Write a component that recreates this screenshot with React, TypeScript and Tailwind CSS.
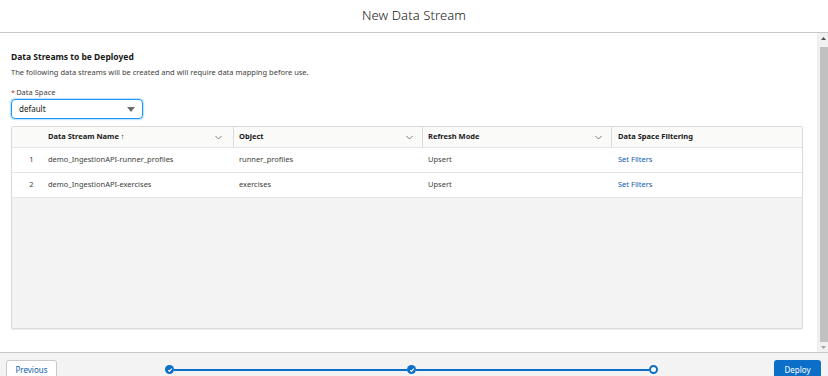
import React from "react";

interface Stream {
  name: string;
  object: string;
  mode: string;
}

const streams: Stream[] = [
  { name: "demo_IngestionAPI-runner_profiles", object: "runner_profiles", mode: "Upsert" },
  { name: "demo_IngestionAPI-exercises", object: "exercises", mode: "Upsert" },
];

const Chevron = () => (
  <svg width="9" height="9" viewBox="0 0 12 12" fill="none" stroke="#706e6b" strokeWidth="1.2">
    <path d="M2 4l4 4 4-4" />
  </svg>
);

const Check = () => (
  <span className="w-[9px] h-[9px] rounded-full bg-[#0b6ec8] flex items-center justify-center">
    <svg width="6" height="6" viewBox="0 0 10 10" fill="none" stroke="white" strokeWidth="2">
      <path d="M2 5.2l2 2 4-4.4" />
    </svg>
  </span>
);

export default function App() {
  return (
    <div
      className="w-[828px] h-[376px] flex flex-col bg-white overflow-hidden text-[#181818]"
      style={{ fontFamily: '"Noto Sans", "Open Sans", sans-serif' }}
    >
      <div className="h-[33px] shrink-0 flex items-center justify-center border-b border-[#c9c9c9]">
        <h1 className="text-[13px] font-light text-[#181818] tracking-[0.1px]">New Data Stream</h1>
      </div>

      <div className="flex-1 flex min-h-0">
        <div className="flex-1 pl-[11px] pr-[14px] pt-[17px] flex flex-col">
          <h2 className="text-[8.5px] font-bold leading-[14px]">Data Streams to be Deployed</h2>
          <p className="text-[7.5px] leading-[12px] mt-[2px] text-[#3e3e3c]">
            The following data streams will be created and will require data mapping before use.
          </p>
          <label className="text-[7.5px] text-[#3e3e3c] mt-[9px] leading-[10px]">
            <span className="text-[#c23934] mr-[1px]">*</span>Data Space
          </label>
          <div className="mt-[2px] w-[132px] h-[20px] rounded-[4px] border border-[#1b96ff] shadow-[0_0_2px_#1b96ff] flex items-center justify-between pl-[7px] pr-[7px]">
            <span className="text-[8px]">default</span>
            <svg width="8" height="5" viewBox="0 0 8 5">
              <path d="M0 0h8L4 5z" fill="#706e6b" />
            </svg>
          </div>

          <div className="mt-[7px] h-[203px] border border-[#dddbda] rounded-[2px] bg-[#f3f3f3] flex flex-col shadow-[0_1px_1px_rgba(0,0,0,0.08)]">
            <div className="h-[21px] bg-[#fafaf9] border-b border-[#e5e5e5] flex text-[7.5px] font-bold">
              <div className="w-[27px]" />
              <div className="w-[195px] flex items-center justify-between pl-[9px] pr-[10px] border-r border-[#dddbda]">
                <span>Data Stream Name ↑</span>
                <Chevron />
              </div>
              <div className="w-[189px] flex items-center justify-between pl-[5px] pr-[8px] border-r border-[#dddbda]">
                <span>Object</span>
                <Chevron />
              </div>
              <div className="w-[189px] flex items-center justify-between pl-[5px] pr-[8px] border-r border-[#dddbda]">
                <span>Refresh Mode</span>
                <Chevron />
              </div>
              <div className="flex-1 flex items-center pl-[6px]">
                <span>Data Space Filtering</span>
              </div>
            </div>
            {streams.map((s, i) => (
              <div key={i} className="h-[25px] bg-white border-b border-[#e5e5e5] flex items-center text-[7.5px] text-[#3e3e3c]">
                <div className="w-[27px] text-center pl-[12px]">{i + 1}</div>
                <div className="w-[195px] pl-[9px]">{s.name}</div>
                <div className="w-[189px] pl-[5px]">{s.object}</div>
                <div className="w-[189px] pl-[5px]">{s.mode}</div>
                <div className="flex-1 pl-[6px] text-[#0b5cab]">Set Filters</div>
              </div>
            ))}
          </div>
        </div>

        <div className="w-[11px] shrink-0 border-l border-[#ededed] bg-[#f1f1f1] flex flex-col items-center pt-[3px] pb-[3px]">
          <svg width="5" height="3" viewBox="0 0 5 3" className="mt-[1px]">
            <path d="M0 3h5L2.5 0z" fill="#505050" />
          </svg>
          <div className="mt-[7px] w-[8px] flex-1 bg-[#c1c1c1] ml-[2px]" />
          <svg width="5" height="3" viewBox="0 0 5 3" className="mt-[4px]">
            <path d="M0 0h5L2.5 3z" fill="#a3a3a3" />
          </svg>
        </div>
      </div>

      <div className="h-[24px] shrink-0 border-t border-[#c9c9c9] bg-[#f3f3f3] flex items-start pt-[7px] pl-[6px] pr-[7px]">
        <button className="w-[51px] h-[20px] rounded-[3px] border border-[#c9c9c9] bg-white text-[8px] text-[#0b5cab]">
          Previous
        </button>
        <div className="flex-1 flex items-center mt-[5px] pl-[108px] pr-[116px]">
          <Check />
          <div className="flex-1 h-[2px] bg-[#0b6ec8]" />
          <Check />
          <div className="flex-1 h-[2px] bg-[#0b6ec8]" />
          <span className="w-[9px] h-[9px] rounded-full border-[2px] border-[#0b6ec8] bg-white" />
        </div>
        <button className="w-[47px] h-[20px] rounded-[3px] bg-[#0b6ec8] text-white text-[8px]">
          Deploy
        </button>
      </div>
    </div>
  );
}
